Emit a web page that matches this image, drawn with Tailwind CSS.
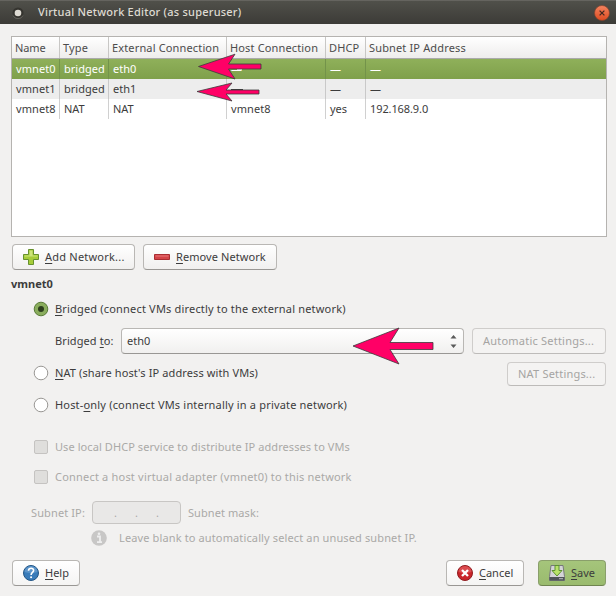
<!DOCTYPE html>
<html lang="en">
<head>
<meta charset="utf-8">
<title>Virtual Network Editor</title>
<script src="https://cdn.jsdelivr.net/npm/@tailwindcss/browser@4"></script>
</head>
<body class="relative w-[616px] h-[596px] overflow-hidden bg-[#f2f1f0] font-['Noto_Sans',sans-serif] text-[11px] leading-[16px] text-[#3c3c3c] whitespace-nowrap">
<header class="h-6 flex items-center bg-linear-to-b from-[#50504a] to-[#3c3b37] border-t border-[#65645f] text-[#dfdbd2] pl-3 pr-[6px]">
  <svg class="w-3 h-3 shrink-0" viewBox="0 0 12 12"><circle cx="6" cy="6" r="5.5" fill="#35342f"/><path d="M1 8.5a5.5 5.5 0 0 0 10 0" fill="none" stroke="#66655f"/><circle cx="6" cy="6" r="3.3" fill="#dedbd3"/></svg>
  <h1 class="relative -top-px ml-[14px] font-medium tracking-[0.23px] grow">Virtual Network Editor (as superuser)</h1>
  <svg class="w-4 h-4 shrink-0" viewBox="0 0 16 16"><defs><linearGradient id="close" x2="0" y2="1"><stop stop-color="#f58460"/><stop offset="1" stop-color="#dd4b20"/></linearGradient></defs><circle cx="8" cy="8" r="7.5" fill="url(#close)" stroke="#82442e" stroke-width=".7"/><path d="M5.6 5.6l4.8 4.8M10.4 5.6l-4.8 4.8" stroke="#442820" stroke-width="1.3"/></svg>
</header>

<main class="px-[11px] pt-3">
  <section class="w-[596px] h-[201px] border border-[#b5b3b0] bg-white">
    <div class="h-[22px] grid grid-cols-[48px_49px_118px_99px_40px_1fr] bg-linear-to-b from-white to-[#eeedec] border-b border-[#aaa] text-[#4c4c4c] tracking-[0.15px] *:border-r *:border-[#c8c7c5] *:pl-[3px] *:pt-[3px] *:last:border-r-0">
      <div class="tracking-[-0.1px]">Name</div><div>Type</div><div>External Connection</div><div>Host Connection</div><div>DHCP</div><div>Subnet IP Address</div>
    </div>
    <div class="h-5 grid grid-cols-[48px_49px_118px_99px_40px_1fr] bg-linear-to-b from-[#8fb05a] to-[#7fa04b] text-white *:border-r *:border-[#73934a] *:pl-1 *:pt-[2px] *:last:border-r-0">
      <div class="tracking-[0.1px]">vmnet0</div><div>bridged</div><div>eth0</div><div>—</div><div>—</div><div>—</div>
    </div>
    <div class="h-5 grid grid-cols-[48px_49px_118px_99px_40px_1fr] bg-[#ededed] *:border-r *:border-[#c9c9c9] *:pl-1 *:pt-[2px] *:last:border-r-0">
      <div class="tracking-[0.1px]">vmnet1</div><div>bridged</div><div>eth1</div><div>—</div><div>—</div><div>—</div>
    </div>
    <div class="h-5 grid grid-cols-[48px_49px_118px_99px_40px_1fr] *:border-r *:border-[#d0d0d0] *:pl-1 *:pt-[2px] *:last:border-r-0">
      <div class="tracking-[0.1px]">vmnet8</div><div>NAT</div><div>NAT</div><div class="tracking-[0.1px]">vmnet8</div><div>yes</div><div class="tracking-[-0.1px]">192.168.9.0</div>
    </div>
  </section>

  <div class="mt-[7px] ml-px flex gap-2">
    <button class="w-[123px] h-[26px] rounded-[4px] border border-[#b9b7b4] border-b-[#999794] bg-linear-to-b from-white to-[#f1f0ef] flex items-center pl-[10px] gap-[6px]">
      <svg class="w-4 h-4" viewBox="0 0 16 16"><path d="M5.5.5h5v5h5v5h-5v5h-5v-5h-5v-5h5z" fill="#a5cc39" stroke="#66912d"/><path d="M6.5 1.5h3v5h5v1h-13v-1h5z" fill="#cce479"/></svg>
      <span class="tracking-[0.22px]"><u class="underline-offset-2">A</u>dd Network...</span>
    </button>
    <button class="w-[134px] h-[26px] rounded-[4px] border border-[#b9b7b4] border-b-[#999794] bg-linear-to-b from-white to-[#f1f0ef] flex items-center pl-[10px] gap-[6px]">
      <svg class="w-4 h-4" viewBox="0 0 16 16"><path d="M.5 5.5h15v5H.5z" fill="#d34448" stroke="#a92d31"/><path d="M1.5 6.5h13v1h-13z" fill="#e87779"/></svg>
      <span class="tracking-[0.08px]"><u class="underline-offset-2">R</u>emove Network</span>
    </button>
  </div>
  <h2 class="mt-[6px] h-4 font-bold">vmnet0</h2>

  <label class="mt-[9px] ml-[22px] h-4 flex items-center gap-[6px]">
    <svg class="w-4 h-4" viewBox="0 0 16 16"><circle cx="8" cy="8" r="6.8" fill="#8aad5d" stroke="#597b37"/><circle cx="8" cy="8" r="3" fill="#2d3e1d"/></svg>
    <span class="tracking-[0.18px]"><u class="underline-offset-2">B</u>ridged (connect VMs directly to the external network)</span>
  </label>
  <div class="mt-[11px] h-[26px] flex items-center w-[595px]">
    <div class="w-[110px] pl-11 tracking-[0.1px]">Bridged <u class="underline-offset-2">t</u>o:</div>
    <div class="w-[343px] h-[26px] rounded-[4px] border border-[#b9b7b4] border-b-[#999794] bg-linear-to-b from-white to-[#f1f0ef] flex items-center pl-[5px] pr-[6px] justify-between">
      <span>eth0</span>
      <svg class="w-[7px] h-[13px]" viewBox="0 0 7 13"><path d="M.5 3.5L3.5 0l3 3.5zM.5 9.5h6l-3 3.5z" fill="#5a5a5a"/></svg>
    </div>
    <button class="ml-2 w-[134px] h-[26px] rounded-[4px] border border-[#cfcdcb] border-b-[#bdbbb9] bg-[#f4f3f2] text-[#a5a4a2] text-left pl-[10px] tracking-[0.22px]">Automatic Settings...</button>
  </div>
  <div class="mt-[7px] ml-[22px] w-[573px] h-[26px] flex justify-between">
    <label class="mt-1 h-4 flex items-center gap-[6px]">
      <svg class="w-4 h-4" viewBox="0 0 16 16"><circle cx="8" cy="8" r="6.8" fill="#fff" stroke="#999794"/></svg>
      <span class="tracking-[0.11px]"><u class="underline-offset-2">N</u>AT (share host's IP address with VMs)</span>
    </label>
    <button class="mt-px w-[99px] h-6 rounded-[4px] border border-[#cfcdcb] border-b-[#bdbbb9] bg-[#f4f3f2] text-[#a5a4a2] text-left pl-[10px] tracking-[0.2px]">NAT Settings...</button>
  </div>
  <label class="mt-[10px] ml-[22px] h-4 flex items-center gap-[6px]">
    <svg class="w-4 h-4" viewBox="0 0 16 16"><circle cx="8" cy="8" r="6.8" fill="#fff" stroke="#999794"/></svg>
    <span class="tracking-[0.18px]">Host-<u class="underline-offset-2">o</u>nly (connect VMs internally in a private network)</span>
  </label>

  <div class="text-[#aaa9a7]">
    <label class="mt-[26px] ml-[23px] h-4 flex items-center gap-[7px]">
      <i class="w-[14px] h-[14px] rounded-[2px] border border-[#c5c3c1] bg-[#dfdedc]"></i><span class="tracking-[0.08px]">Use local DHCP service to distribute IP addresses to VMs</span>
    </label>
    <label class="mt-[14px] ml-[23px] h-4 flex items-center gap-[7px]">
      <i class="w-[14px] h-[14px] rounded-[2px] border border-[#c5c3c1] bg-[#dfdedc]"></i><span class="tracking-[0.2px]">Connect a host virtual adapter (vmnet0) to this network</span>
    </label>
    <div class="mt-[16px] h-[23px] flex items-center">
      <div class="w-[81px] pl-5 tracking-[0.12px]">Subnet IP:</div>
      <div class="w-[89px] h-[23px] rounded-[4px] border border-[#c8c6c4] bg-[#e9e8e7] flex items-center pl-[21px] gap-[18px]"><span class="w-[3px]">.</span><span class="w-[3px]">.</span><span class="w-[3px]">.</span></div>
      <span class="ml-[7px] tracking-[0.08px]">Subnet mask:</span>
    </div>
    <div class="mt-[6px] ml-[80px] h-4 flex items-center gap-3">
      <svg class="w-4 h-4" viewBox="0 0 16 16"><circle cx="8" cy="8" r="7.8" fill="#c8c7c6"/><path d="M6 6.5h3V12M6 12.2h5" fill="none" stroke="#eee" stroke-width="1.8"/><circle cx="8" cy="3.8" r="1.3" fill="#eee"/></svg>
      <span class="tracking-[0.13px]">Leave blank to automatically select an unused subnet IP.</span>
    </div>
  </div>

  <footer class="mt-[14px] ml-px w-[594px] flex">
    <button class="w-[68px] h-[26px] rounded-[4px] border border-[#b9b7b4] border-b-[#999794] bg-linear-to-b from-white to-[#f5f4f3] flex items-center pl-[10px] gap-[6px]">
      <svg class="w-4 h-4" viewBox="0 0 16 16"><circle cx="8" cy="8" r="7.5" fill="#397bb9" stroke="#245685"/><path d="M1.5 7a6.5 6 0 0 1 13 0Q8 9 1.5 7z" fill="#6ba0d0" opacity=".7"/><path d="M5.5 5.7c.2-3.4 5.3-3.1 5.1-.2C10.5 7.4 8.1 7.3 8.1 10" fill="none" stroke="#fff" stroke-width="1.6"/><circle cx="8.1" cy="12.3" r="1.05" fill="#fff"/></svg>
      <span><u class="underline-offset-2">H</u>elp</span>
    </button>
    <button class="ml-auto w-[78px] h-[26px] rounded-[4px] border border-[#b9b7b4] border-b-[#999794] bg-linear-to-b from-white to-[#f5f4f3] flex items-center pl-[10px] gap-[6px]">
      <svg class="w-4 h-4" viewBox="0 0 16 16"><circle cx="8" cy="8" r="7.5" fill="#c9252b" stroke="#8f1d21"/><path d="M1.5 7a6.5 6 0 0 1 13 0Q8 9 1.5 7z" fill="#e86568" opacity=".6"/><path d="M5 5l6 6M11 5l-6 6" stroke="#fff" stroke-width="2.3"/></svg>
      <span><u class="underline-offset-2">C</u>ancel</span>
    </button>
    <button class="ml-[14px] w-[68px] h-[26px] rounded-[4px] border border-[#8a9f6b] border-b-[#6f8450] bg-linear-to-b from-[#a5c57b] to-[#9abb6e] flex items-center pl-[10px] gap-[6px]">
      <svg class="w-4 h-4" viewBox="0 0 16 16"><path d="M2 .5h12l1.5 11v4H.5v-4z" fill="#d4d4d7" stroke="#777a7b"/><path d="M.5 12h15v3.5H.5z" fill="#51555a"/><path d="M10 13.7h4" stroke="#b7babd"/><path d="M6 .5h4v5h3L8 11 3 5.5h3z" fill="#b8e369" stroke="#5c9230"/></svg>
      <span><u class="underline-offset-2">S</u>ave</span>
    </button>
  </footer>
</main>

<svg class="absolute inset-0 w-[616px] h-[596px] pointer-events-none" viewBox="0 0 616 596">
  <path d="M237 69.5h5" stroke="#fff"/>
  <path d="M231 89.5h12" stroke="#3b3b3b"/>
  <g fill="#ff0066" stroke="#3b3b3b" stroke-width=".8">
    <path d="M198.500 66.500L235 54.200l-6.500 9.800h32.500v5h-32.500l6.500 10z"/>
    <path d="M197 91.500l35-8.500-6 7h33v4h-33l6 7z"/>
    <path d="M353 346l46-18-9 14.500h43v7h-43l9 14.500z"/>
  </g>
</svg>
</body>
</html>
